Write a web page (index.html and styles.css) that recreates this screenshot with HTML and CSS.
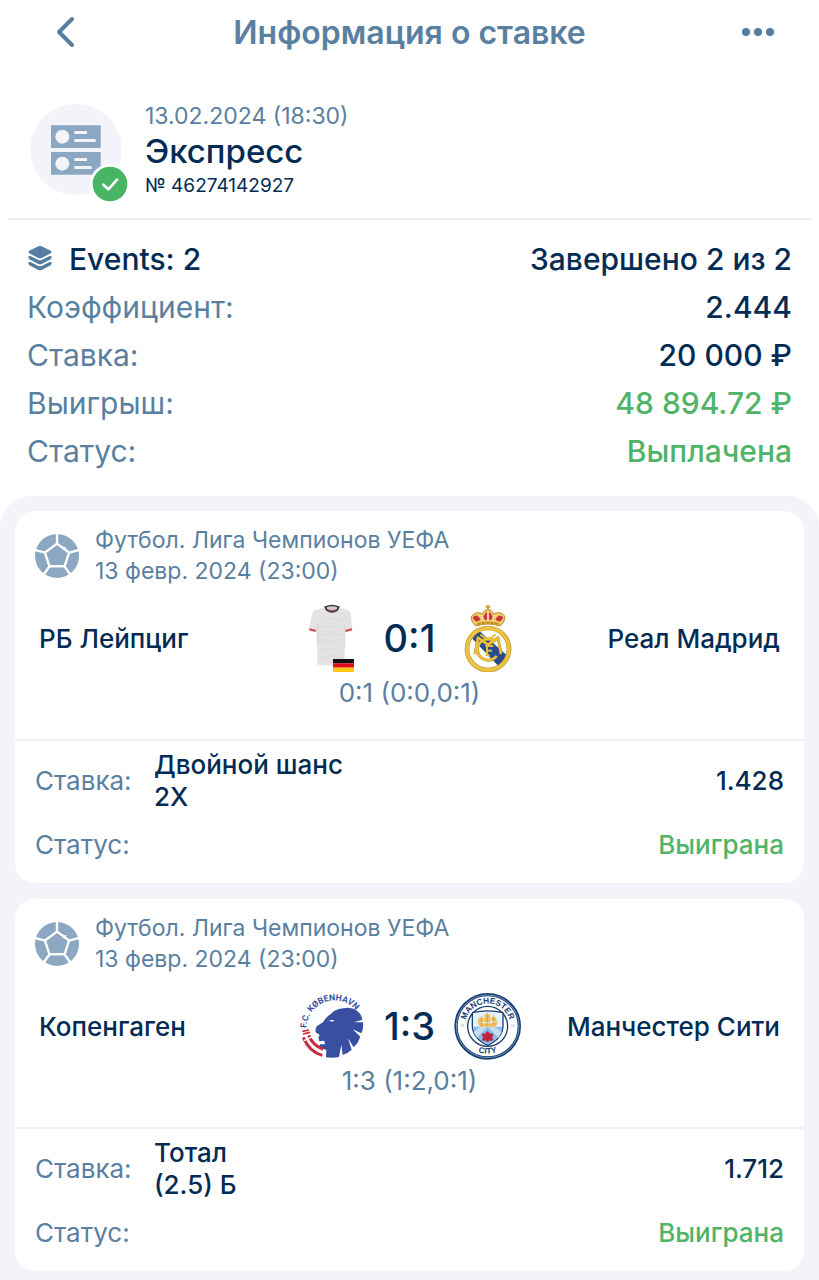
FILE: index.html
```
<!DOCTYPE html>
<html lang="ru">
<head>
  <meta charset="UTF-8">
  <meta name="viewport" content="width=device-width, initial-scale=1.0">
  <title>Информация о ставке</title>
  <link rel="stylesheet" href="styles.css">
</head>
<body>
  <!-- Shared icons -->
  <svg class="sprite" aria-hidden="true">
    <symbol id="ball" viewBox="0 0 128 128">
      <circle cx="64" cy="64" r="64" fill="#8ba7c1"/>
      <g fill="none" stroke="#fff" stroke-width="7" stroke-linejoin="round">
        <path d="M64 28L99 54L86 94H42L29 54Z"/>
        <path d="M64 28V-2M99 54L130 46M86 94L104 120M42 94L24 120M29 54L-2 46"/>
      </g>
      <path d="M74 34L92 40L84 48Z" fill="#fff"/>
    </symbol>
  </svg>

  <header class="topbar">
    <button class="icon-button" aria-label="Назад">
      <svg width="20" height="32" viewBox="0 0 20 32"><path d="M16 3L3 16L16 29" fill="none" stroke="#557d9f" stroke-width="4" stroke-linecap="round" stroke-linejoin="round"/></svg>
    </button>
    <h1>Информация о ставке</h1>
    <button class="icon-button menu" aria-label="Меню">
      <svg width="32" height="8" viewBox="0 0 32 8" fill="#557d9f"><circle cx="4" cy="4" r="4"/><circle cx="16" cy="4" r="4"/><circle cx="28" cy="4" r="4"/></svg>
    </button>
  </header>

  <!-- Bet title -->
  <section class="bet-head">
    <svg class="bet-icon" viewBox="0 0 300 300">
      <circle cx="138" cy="137" r="137" fill="#f3f4f9"/>
      <path d="M63 64H212V132H63ZM63 144H212V212H63Z" fill="#8ba7c1"/>
      <g fill="#f3f4f9">
        <circle cx="97" cy="98" r="21"/>
        <circle cx="97" cy="179" r="21"/>
        <path d="M133 81h38v9h-38zM133 105h64v9h-64zM133 162h38v9h-38zM133 186h52v9h-52z"/>
      </g>
      <circle cx="240" cy="240" r="60" fill="#fff"/>
      <circle cx="240" cy="240" r="52" fill="#48b564"/>
      <path d="M220 242L235 256L261 227" fill="none" stroke="#fff" stroke-width="8" stroke-linecap="round" stroke-linejoin="round"/>
    </svg>
    <div>
      <p class="bet-date">13.02.2024 (18:30)</p>
      <h2>Экспресс</h2>
      <p class="bet-number">№ 46274142927</p>
    </div>
  </section>

  <!-- Summary -->
  <section class="summary">
    <div class="summary-row">
      <span class="events">
        <svg width="26" height="26" viewBox="0 0 78 78" fill="#557d9f">
          <path d="M39 0Q41 0 44 1L71 14Q76 18 71 22L44 36Q39 38 34 36L7 22Q2 18 7 14L34 1Q37 0 39 0Z"/>
          <path d="M5 30Q8 29 12 31L34 42Q39 44 44 42L66 31Q70 29 73 30Q76 36 71 40L44 54Q39 56 34 54L7 40Q2 36 5 30Z"/>
          <path d="M5 48Q8 47 12 49L34 60Q39 62 44 60L66 49Q70 47 73 48Q76 54 71 58L44 72Q39 74 34 72L7 58Q2 54 5 48Z"/>
        </svg>
        Events: 2
      </span>
      <span class="value">Завершено 2 из 2</span>
    </div>
    <div class="summary-row"><span>Коэффициент:</span><span class="value">2.444</span></div>
    <div class="summary-row"><span>Ставка:</span><span class="value">20 000 ₽</span></div>
    <div class="summary-row"><span>Выигрыш:</span><span class="value green">48 894.72 ₽</span></div>
    <div class="summary-row"><span>Статус:</span><span class="value green">Выплачена</span></div>
  </section>

  <!-- Events -->
  <main class="event-list">
    <article class="card">
      <div class="match">
        <div class="league">
          <svg class="ball"><use href="#ball"/></svg>
          <p>Футбол. Лига Чемпионов УЕФА<br>13 февр. 2024 (23:00)</p>
        </div>
        <div class="teams">
          <span class="team">РБ Лейпциг</span>
          <!-- Shirt with flag -->
          <svg class="crest" viewBox="0 0 204 204">
            <path d="M80 10Q102 22 124 10L152 20Q158 24 160 44L163 80L143 84L140 74V178Q102 188 58 182L57 74L53 84L33 80Q40 30 48 20Z" fill="#e5e2e4"/>
            <path d="M60 50L100 42L136 52M60 72L92 66L138 76M60 94L102 88L138 96M60 116L96 112L138 120M60 140L100 134L138 142M60 162L98 156L136 162" fill="none" stroke="#d9d6d8" stroke-width="2"/>
            <path d="M58 60V120M140 60V130" stroke="#cbc8cc" stroke-width="2"/>
            <path d="M34 76L54 81M142 81L162 76" stroke="#d84455" stroke-width="6"/>
            <path d="M82 9Q102 0 122 9Q118 23 102 24Q86 23 82 9Z" fill="#d5cccc" stroke="#333746" stroke-width="5"/>
            <path d="M92 17Q102 23 112 17" fill="none" stroke="#c64553" stroke-width="3"/>
            <path d="M105 165h63v13h-63z" fill="#111"/>
            <path d="M105 178h63v13h-63z" fill="#e20b17"/>
            <path d="M105 191h63v13h-63z" fill="#ffc914"/>
          </svg>
          <span class="score">0:1</span>
          <!-- Real Madrid -->
          <svg class="crest" viewBox="3 0 204 204">
            <path d="M68 66Q43 40 64 29Q77 22 88 30Q94 16 105 16Q116 16 122 30Q135 22 148 29Q167 40 142 66Q105 54 68 66Z" fill="#efd16b" stroke="#b98a32" stroke-width="3"/>
            <path d="M70 53Q51 39 66 35Q76 32 83 48ZM88 48Q92 29 102 24V47ZM108 47V24Q118 29 122 48ZM127 48Q134 32 144 35Q159 39 140 53Z" fill="#cf3440"/>
            <path d="M105 3V19M98 9H112" stroke="#c89a32" stroke-width="5"/>
            <path d="M105 25V55M86 34L94 53M124 34L116 53" stroke="#f2dda0" stroke-width="5"/>
            <path d="M70 62Q105 49 140 62" fill="none" stroke="#d3a72d" stroke-width="7"/>
            <path d="M76 61Q105 51 134 61" fill="none" stroke="#c33b46" stroke-width="3" stroke-dasharray="5 8"/>
            <circle cx="105" cy="135" r="63" fill="#fff"/>
            <path d="M58 104Q66 88 80 82L160 152Q152 172 136 186Z" fill="#284a91"/>
            <circle cx="105" cy="135" r="63" fill="none" stroke="#b8933a" stroke-width="14"/>
            <circle cx="105" cy="135" r="63" fill="none" stroke="#ecc53c" stroke-width="10"/>
            <g fill="none" stroke="#b5923a" stroke-width="9" stroke-linejoin="round">
              <path d="M127 113A32 32 0 1 0 131 156"/>
              <path d="M66 150L75 101L105 122L135 101L144 150"/>
            </g>
            <g fill="none" stroke="#eec338" stroke-width="6" stroke-linejoin="round">
              <path d="M127 113A32 32 0 1 0 131 156"/>
              <path d="M66 150L75 101L105 122L135 101L144 150"/>
              <path d="M82 92L105 107L128 92"/>
            </g>
            <path d="M97 126H121M102 126V154M102 140H117M97 154H110" fill="none" stroke="#e6bd36" stroke-width="6"/>
          </svg>
          <span class="team away">Реал Мадрид</span>
        </div>
        <p class="periods">0:1 (0:0,0:1)</p>
      </div>
      <div class="bet">
        <div class="bet-row">
          <span class="label">Ставка:</span>
          <span class="pick">Двойной шанс<br>2X</span>
          <span class="odds">1.428</span>
        </div>
        <div class="bet-row">
          <span class="label">Статус:</span>
          <span class="odds green">Выиграна</span>
        </div>
      </div>
    </article>

    <article class="card">
      <div class="match">
        <div class="league">
          <svg class="ball"><use href="#ball"/></svg>
          <p>Футбол. Лига Чемпионов УЕФА<br>13 февр. 2024 (23:00)</p>
        </div>
        <div class="teams">
          <span class="team">Копенгаген</span>
          <!-- FC Copenhagen -->
          <svg class="crest" viewBox="0 0 204 204">
            <path id="fck-arc" d="M26 108A83 83 0 0 1 192 108" fill="none"/>
            <text class="fck-text"><textPath href="#fck-arc">F.C. KØBENHAVN</textPath></text>
            <path d="M99 65Q112 51 136 49Q161 44 177 56Q190 65 193 83L168 91L195 91Q197 112 190 124L164 112L187 134Q181 153 167 166L150 139L161 173Q147 186 134 189L130 158L123 195Q103 199 84 196L85 175Q80 169 71 171L63 164L66 157L82 157L78 146L64 148L61 137L65 129L53 121Q51 109 57 102L75 91Q84 75 99 65Z" fill="#394fa1"/>
            <path d="M92 86Q101 82 109 85L104 89Z" fill="#fff"/>
            <g fill="none" stroke="#c92b3d">
              <path d="M13 118L33 114M15 126L36 121" stroke-width="5"/>
              <path d="M16 136Q34 180 73 190" stroke-width="9"/>
              <path d="M32 130Q44 160 76 172" stroke-width="9"/>
            </g>
            <path d="M18 146L44 134" stroke="#fff" stroke-width="4"/>
          </svg>
          <span class="score">1:3</span>
          <!-- Manchester City -->
          <svg class="crest" viewBox="2 0 204 204">
            <path id="city-arc" d="M40 128A68 68 0 1 1 166 128" fill="none"/>
            <path id="city-base" d="M52 172Q103 198 154 172" fill="none"/>
            <circle cx="103" cy="103" r="95" fill="#fff" stroke="#1c3d70" stroke-width="10"/>
            <circle cx="103" cy="103" r="94" fill="none" stroke="#8fc0e5" stroke-width="2"/>
            <circle cx="103" cy="103" r="60" fill="#fff" stroke="#1c3d70" stroke-width="4"/>
            <path d="M57 62Q103 51 149 62V102Q148 139 103 160Q58 139 57 102Z" fill="#e4f2fa" stroke="#1c3d70" stroke-width="4"/>
            <path d="M60 104H146Q144 137 103 157Q62 137 60 104Z" fill="#87bde7"/>
            <path d="M60 121L81 104H103L70 138ZM146 121L125 104H103L136 138Z" fill="#fff" opacity="0.5"/>
            <path d="M72 91Q103 100 135 88L127 104H80ZM77 77H91L89 91H73ZM94 67H110L112 91H92ZM114 75H126L131 88H115Z" fill="#efbd55"/>
            <path d="M85 72V99M102 62V101M120 69V98" stroke="#c99538" stroke-width="2"/>
            <path d="M103 118L109 125L119 126L116 136L118 145L108 145L103 150L97 145L87 145L90 136L86 126L97 125Z" fill="#d51f3a" stroke="#812a4c" stroke-width="2"/>
            <circle cx="103" cy="135" r="4" fill="#8d294b"/>
            <text class="city-text"><textPath href="#city-arc" startOffset="50%">MANCHESTER</textPath></text>
            <text class="city-text"><textPath href="#city-base" startOffset="50%">CITY</textPath></text>
            <text class="city-year" x="27" y="106">18</text>
            <text class="city-year" x="178" y="106">94</text>
          </svg>
          <span class="team away">Манчестер Сити</span>
        </div>
        <p class="periods">1:3 (1:2,0:1)</p>
      </div>
      <div class="bet">
        <div class="bet-row">
          <span class="label">Ставка:</span>
          <span class="pick">Тотал<br>(2.5) Б</span>
          <span class="odds">1.712</span>
        </div>
        <div class="bet-row">
          <span class="label">Статус:</span>
          <span class="odds green">Выиграна</span>
        </div>
      </div>
    </article>
  </main>
</body>
</html>
```
FILE: styles.css
```
* {
  box-sizing: border-box;
}

body {
  margin: 0;
  min-height: 100vh;
  display: flex;
  flex-direction: column;
  font-family: Inter, 'Liberation Sans', sans-serif;
  color: #5a80a1;
  background: #fff;
}

h1, h2, p {
  margin: 0;
}

.sprite {
  display: none;
}

.green {
  color: #4fb368;
}

/* Top bar */
.topbar {
  display: flex;
  align-items: center;
  justify-content: space-between;
  height: 64px;
  padding: 0 36px;
}

.topbar h1 {
  font-size: 32px;
  font-weight: 600;
}

.icon-button {
  display: flex;
  align-items: center;
  justify-content: center;
  width: 60px;
  height: 48px;
  padding: 0;
  border: none;
  background: none;
  cursor: pointer;
}

.menu {
  justify-content: flex-end;
  padding-right: 9px;
}

/* Bet title */
.bet-head {
  display: flex;
  gap: 15px;
  margin: 36px 8px 0;
  padding: 0 22px 14px;
  border-bottom: 2px solid #eeeff2;
}

.bet-icon {
  width: 100px;
  height: 100px;
  margin-top: 4px;
}

.bet-date {
  font-size: 23px;
  line-height: 32px;
}

.bet-head h2 {
  font-size: 33px;
  font-weight: 500;
  line-height: 38px;
  color: #032c54;
}

.bet-number {
  font-size: 19px;
  line-height: 32px;
  color: #032c54;
}

/* Summary */
.summary {
  padding: 15px 27px 21px;
  font-size: 30px;
}

.summary-row {
  display: flex;
  justify-content: space-between;
  line-height: 48px;
}

.events {
  display: flex;
  align-items: center;
  gap: 16px;
  font-weight: 500;
  color: #032c54;
}

.summary .value {
  font-weight: 500;
}

.summary .value:not(.green) {
  color: #032c54;
}

/* Events */
.event-list {
  flex: 1;
  display: flex;
  flex-direction: column;
  gap: 16px;
  padding: 15px 15px 9px;
  border-radius: 32px 32px 0 0;
  background: #f3f4f9;
}

.card {
  border-radius: 20px;
  background: #fff;
}

.match {
  padding: 14px 24px 30px;
  border-bottom: 2px solid #eeeff2;
}

.league {
  display: flex;
  align-items: center;
  gap: 16px;
  margin-left: -4px;
  font-size: 23px;
  line-height: 31px;
}

.ball {
  width: 44px;
  height: 44px;
}

.teams {
  display: grid;
  grid-template-columns: 1fr 68px 88px 68px 1fr;
  align-items: center;
  margin-top: 17px;
}

.team {
  font-size: 26px;
  font-weight: 500;
  color: #032c54;
  white-space: nowrap;
}

.away {
  text-align: right;
}

.crest {
  width: 68px;
  height: 68px;
}

.fck-text {
  font: bold 26px Roboto, 'Liberation Sans', sans-serif;
  fill: #394fa1;
}

.city-text {
  font: bold 25px 'Liberation Sans', sans-serif;
  text-anchor: middle;
  fill: #1c3d70;
}

.city-year {
  font: 10px 'Liberation Sans', sans-serif;
  text-anchor: middle;
  fill: #79aada;
}

.score {
  font-size: 38px;
  font-weight: 500;
  text-align: center;
  color: #032c54;
}

.periods {
  margin-top: 5px;
  font-size: 26px;
  line-height: 32px;
  text-align: center;
}

/* Bet details */
.bet {
  display: flex;
  flex-direction: column;
  gap: 16px;
  padding: 8px 20px 22px;
  font-size: 26px;
  line-height: 32px;
}

.bet-row {
  display: flex;
  align-items: center;
}

.label {
  width: 119px;
}

.pick {
  font-weight: 500;
  color: #032c54;
}

.odds {
  margin-left: auto;
  font-weight: 500;
}

.odds:not(.green) {
  color: #032c54;
}
```
